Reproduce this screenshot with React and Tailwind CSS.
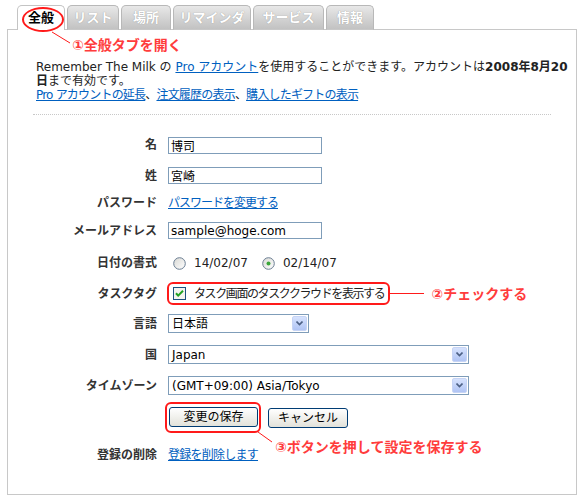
import React from 'react';

const tabs = [
  { label: '全般', w: 'w-[48px]', active: true },
  { label: 'リスト', w: 'w-[52px]' },
  { label: '場所', w: 'w-[50px]' },
  { label: 'リマインダ', w: 'w-[78px]' },
  { label: 'サービス', w: 'w-[71px]' },
  { label: '情報', w: 'w-[48px]' },
];

function Radio({ checked }) {
  return (
    <svg width="13" height="13" viewBox="0 0 13 13" className="shrink-0">
      <defs>
        <linearGradient id="rg" x1="0" y1="0" x2="1" y2="1">
          <stop offset="0" stopColor="#d8d8d4" />
          <stop offset="1" stopColor="#ffffff" />
        </linearGradient>
      </defs>
      <circle cx="6.5" cy="6.5" r="5.8" fill="url(#rg)" stroke="#6a7d92" strokeWidth="1" />
      {checked && <circle cx="6.5" cy="6.5" r="2" fill="#3aa63a" />}
    </svg>
  );
}

function Checkbox() {
  return (
    <svg width="13" height="13" viewBox="0 0 13 13" className="shrink-0">
      <rect x="0.5" y="0.5" width="12" height="12" fill="#f4f4f0" stroke="#1c5180" />
      <path d="M3 6.2 L5.2 8.6 L10 3.8" fill="none" stroke="#21a121" strokeWidth="2" />
    </svg>
  );
}

function Select({ value, w }) {
  return (
    <div className={`${w} h-[19px] border border-[#7f9db9] bg-white flex items-center justify-between`}>
      <span className="pl-[3px] text-[12px] text-black whitespace-nowrap">{value}</span>
      <span className="m-px w-[15px] h-[15px] rounded-[2px] border border-[#c6d4f5] bg-gradient-to-b from-[#d6e2fd] to-[#b0c4f4] flex items-center justify-center">
        <svg width="7" height="5" viewBox="0 0 7 5">
          <path d="M0.5 0.5 L3.5 3.5 L6.5 0.5" fill="none" stroke="#4d6185" strokeWidth="1.6" />
        </svg>
      </span>
    </div>
  );
}

function TextInput({ value }) {
  return (
    <input
      readOnly
      defaultValue={value}
      className="w-[154px] h-[17px] border border-[#7f9db9] bg-white px-[2px] text-[12px] text-black font-['DejaVu_Sans','Noto_Sans_CJK_JP',sans-serif] outline-none"
    />
  );
}

function Row({ label, h, children }) {
  return (
    <div className={`grid grid-cols-[149px_1fr] gap-x-[11px] items-center ${h}`}>
      <div className="text-right font-bold text-[#333] whitespace-nowrap">{label}</div>
      <div className="flex items-center">{children}</div>
    </div>
  );
}

function Btn({ children, w }) {
  return (
    <button className={`${w} h-[20px] border border-[#003c74] rounded-[3px] bg-gradient-to-b from-white to-[#e2e2da] text-[12px] text-black leading-none`}>
      {children}
    </button>
  );
}

export default function App() {
  return (
    <div className="relative w-[584px] h-[500px] bg-white text-[12px] leading-[14px] text-[#222] font-['DejaVu_Sans','Noto_Sans_CJK_JP',sans-serif]">
      {/* tabs */}
      <div className="relative z-10 flex gap-[2px] pl-[17px] pt-[5px]">
        {tabs.map((t) =>
          t.active ? (
            <div
              key={t.label}
              className={`${t.w} h-[25px] flex items-center justify-center rounded-t-[5px] border border-b-0 border-[#c4c4c4] bg-white font-bold text-[13px] text-black`}
            >
              {t.label}
            </div>
          ) : (
            <div
              key={t.label}
              className={`${t.w} h-[25px] flex items-center justify-center rounded-t-[5px] border border-[#b8b8b8] border-b-[#c8c8c8] bg-gradient-to-b from-[#e8e8e8] to-[#c2c2c2] font-bold text-[13px] text-white [text-shadow:0_0_1px_#8a8a8a]`}
            >
              {t.label}
            </div>
          )
        )}
      </div>

      {/* panel */}
      <div className="-mt-px ml-[7px] w-[570px] h-[466px] border border-[#c8c8c8]">
        <div className="mx-[25px] pt-[30px] pb-[12px] pl-[3px] border-b border-dotted border-[#c8c8c8]">
          <div className="whitespace-nowrap">
            Remember The Milk の <a className="text-[#0060c0] underline">Pro アカウント</a>を使用することができます。アカウントは<b>2008年8月20</b>
          </div>
          <div>
            <b>日</b>まで有効です。
          </div>
          <div className="whitespace-nowrap tracking-[-0.8px]">
            <a className="text-[#0060c0] underline">Pro アカウントの延長</a>、<a className="text-[#0060c0] underline">注文履歴の表示</a>、<a className="text-[#0060c0] underline">購入したギフトの表示</a>
          </div>
        </div>

        <div className="mt-[15px] flex flex-col">
          <Row label="名" h="h-[30px]">
            <TextInput value="博司" />
          </Row>
          <Row label="姓" h="h-[31px]">
            <TextInput value="宮崎" />
          </Row>
          <Row label="パスワード" h="h-[24px]">
            <a className="text-[#0060c0] underline tracking-[-1px]">パスワードを変更する</a>
          </Row>
          <Row label="メールアドレス" h="h-[31px]">
            <TextInput value="sample@hoge.com" />
          </Row>
          <Row label="日付の書式" h="h-[34px]">
            <div className="flex items-center pl-[5px] gap-[8px]">
              <Radio />
              <span>14/02/07</span>
              <span className="ml-[6px]"><Radio checked /></span>
              <span>02/14/07</span>
            </div>
          </Row>
          <Row label="タスクタグ" h="h-[27px]">
            <div className="-ml-px flex items-center">
              <div className="h-[23px] flex items-center gap-[8px] border-2 border-[#ff1a1a] rounded-[6px] pl-[4px] pr-[4px]">
                <Checkbox />
                <span className="whitespace-nowrap tracking-[-1.4px]">タスク画面のタスククラウドを表示する</span>
              </div>
              <div className="w-[34px] h-px bg-[#ff1a1a]" />
              <span className="ml-[7px] text-[14px] font-bold text-[#ff3c3c] whitespace-nowrap">②チェックする</span>
            </div>
          </Row>
          <Row label="言語" h="h-[33px]">
            <Select value="日本語" w="w-[141px]" />
          </Row>
          <Row label="国" h="h-[29px]">
            <Select value="Japan" w="w-[301px]" />
          </Row>
          <Row label="タイムゾーン" h="h-[33px]">
            <Select value="(GMT+09:00) Asia/Tokyo" w="w-[301px]" />
          </Row>
          <Row label="" h="h-[30px]">
            <div className="-ml-[3px] flex items-center gap-[7px]">
              <div className="border-2 border-[#ff1a1a] rounded-[6px] pl-[2px] pr-px pt-[3px] pb-[4px]">
                <Btn w="w-[89px]">変更の保存</Btn>
              </div>
              <Btn w="w-[80px]">キャンセル</Btn>
            </div>
          </Row>
          <div className="mt-[8px]">
            <Row label="登録の削除" h="h-[30px]">
              <a className="text-[#0060c0] underline tracking-[-0.75px]">登録を削除します</a>
            </Row>
          </div>
        </div>
      </div>

      {/* annotation 1 */}
      <div className="absolute left-[22px] top-[7px] w-[42px] h-[25px] rounded-[50%] border-2 border-[#ff1a1a] z-20" />
      <svg className="absolute left-0 top-0 z-20" width="584" height="500" pointerEvents="none">
        <line x1="52" y1="32" x2="70" y2="43" stroke="#ff1a1a" strokeWidth="1" />
        <line x1="258" y1="432" x2="272" y2="442" stroke="#ff1a1a" strokeWidth="1" />
      </svg>
      <div className="absolute left-[72px] top-[37px] text-[14px] leading-[16px] font-bold text-[#ff3c3c] whitespace-nowrap z-20">
        ①全般タブを開く
      </div>
      {/* annotation 3 */}
      <div className="absolute left-[275px] top-[439px] text-[14px] leading-[16px] font-bold text-[#ff3c3c] whitespace-nowrap z-20">
        ③ボタンを押して設定を保存する
      </div>
    </div>
  );
}
